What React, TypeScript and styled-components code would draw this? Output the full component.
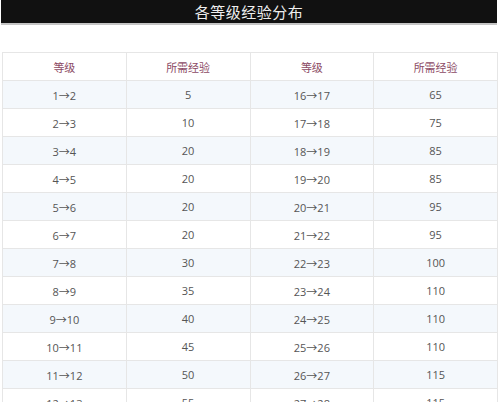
import styled, { createGlobalStyle } from "styled-components";

const rows: [string, number, string, number][] = [
  ["1→2", 5, "16→17", 65],
  ["2→3", 10, "17→18", 75],
  ["3→4", 20, "18→19", 85],
  ["4→5", 20, "19→20", 85],
  ["5→6", 20, "20→21", 95],
  ["6→7", 20, "21→22", 95],
  ["7→8", 30, "22→23", 100],
  ["8→9", 35, "23→24", 110],
  ["9→10", 40, "24→25", 110],
  ["10→11", 45, "25→26", 110],
  ["11→12", 50, "26→27", 115],
  ["12→13", 55, "27→28", 115],
  ["13→14", 60, "28→29", 120],
  ["14→15", 60, "29→30", 120],
];

export default function App() {
  return (
    <>
      <GlobalStyle />
      <Page>
        <TitleBar>各等级经验分布</TitleBar>
        <ExpTable>
          <thead>
            <tr>
              <HeadCell>等级</HeadCell>
              <HeadCell>所需经验</HeadCell>
              <HeadCell>等级</HeadCell>
              <HeadCell>所需经验</HeadCell>
            </tr>
          </thead>
          <tbody>
            {rows.map(([a, b, c, d], i) => (
              <Row key={a} $shaded={i % 2 === 0}>
                <Cell>{a}</Cell>
                <Cell>{b}</Cell>
                <Cell>{c}</Cell>
                <Cell>{d}</Cell>
              </Row>
            ))}
          </tbody>
        </ExpTable>
      </Page>
    </>
  );
}

const GlobalStyle = createGlobalStyle`
  html, body {
    margin: 0;
    padding: 0;
    background: #fff;
    overflow: hidden;
  }
  body {
    font-family: "Noto Sans", "Noto Sans CJK SC", sans-serif;
  }
`;

const Page = styled.div`
  display: flex;
  flex-direction: column;
  width: 500px;
  height: 402px;
  overflow: hidden;
`;

const TitleBar = styled.div`
  height: 23px;
  margin: 0 3px 0 1px;
  border-bottom: 2px solid #c4c4c4;
  background: #111;
  color: #eee;
  font-family: "Noto Sans CJK SC", sans-serif;
  font-size: 15px;
  line-height: 23px;
  text-align: center;
  letter-spacing: 0.5px;
`;

const ExpTable = styled.table`
  width: 496px;
  margin: 27px 2px 0;
  border-collapse: collapse;
  table-layout: fixed;
  border: 1px solid #e6e6e6;
`;

const HeadCell = styled.th`
  height: 27px;
  padding: 0;
  border: 1px solid #e6e6e6;
  background: #fff;
  color: #8c4a64;
  font-family: "Noto Sans CJK SC", sans-serif;
  font-size: 11px;
  font-weight: 400;
  text-align: center;
`;

const Row = styled.tr<{ $shaded: boolean }>`
  background: ${(p) => (p.$shaded ? "#f4f8fc" : "#fff")};
`;

const Cell = styled.td`
  height: 27px;
  padding: 0;
  border: 1px solid #e6e6e6;
  color: #555;
  font-family: "Open Sans", "Noto Sans CJK SC", sans-serif;
  font-size: 11px;
  text-align: center;
`;
